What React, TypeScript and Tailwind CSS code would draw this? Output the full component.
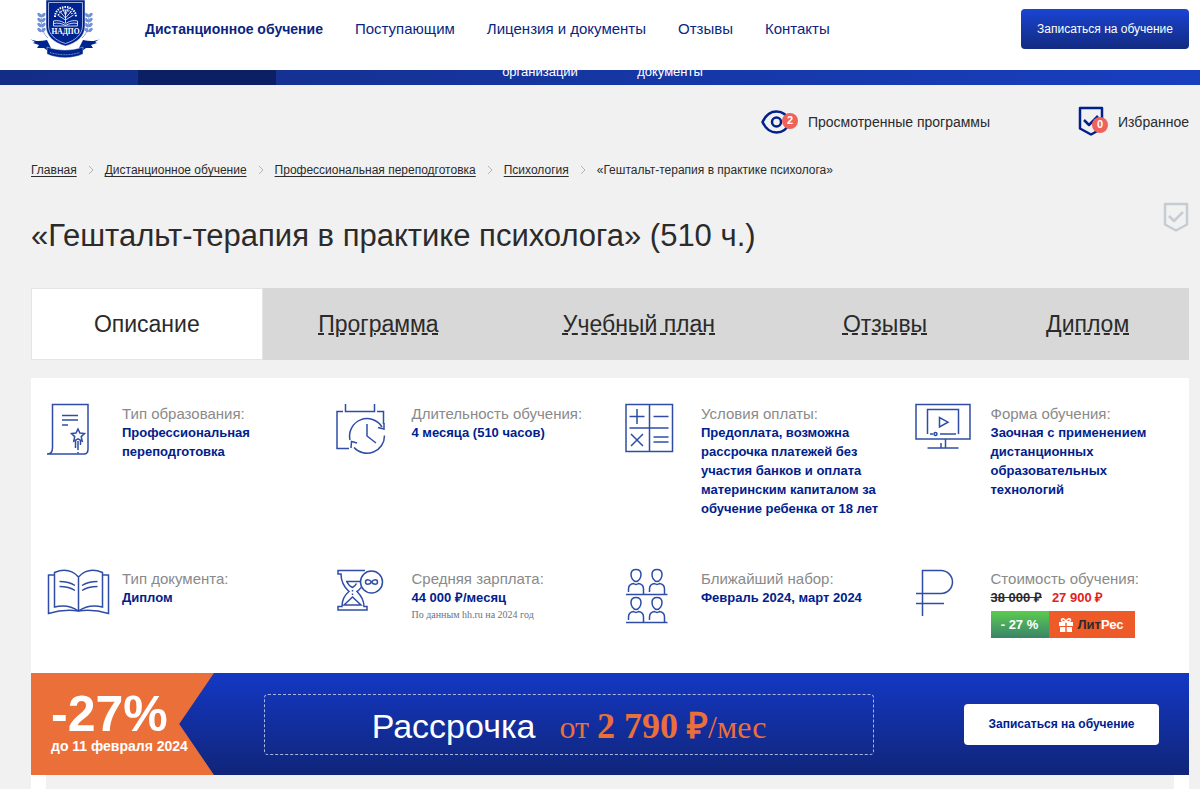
import React from "react";

const sans = "font-['Liberation_Sans',Arial,sans-serif]";
const serif = "font-['Liberation_Serif','Times_New_Roman',serif]";

function Logo() {
  return (
    <svg width="70" height="60" viewBox="0 0 70 60" aria-hidden="true">
      <g fill="#6f8fd8">
        {[15, 20, 25, 30].map((y) => (
          <g key={y}>
            <ellipse cx="9.500" cy={y} rx="2.600" ry="1.500" transform={`rotate(40 9.500 ${y})`} />
            <ellipse cx="13.500" cy={y} rx="2.600" ry="1.500" transform={`rotate(-40 13.500 ${y})`} />
            <ellipse cx="60.500" cy={y} rx="2.600" ry="1.500" transform={`rotate(-40 60.500 ${y})`} />
            <ellipse cx="56.500" cy={y} rx="2.600" ry="1.500" transform={`rotate(40 56.500 ${y})`} />
          </g>
        ))}
      </g>
      <path d="M12 14c-2 9 0 19 6 24M58 14c2 9 0 19-6 24" fill="none" stroke="#6f8fd8" strokeWidth="0.800" />
      <path d="M0 39c6 3 11 2 17 1l4 8-2 4-5-4-7 0 2-3-6-2 2-1zM70 39c-6 3-11 2-17 1l-4 8 2 4 5-4 7 0-2-3 6-2-2-1z" fill="#00248f" />
      <path d="M16 0h39v26c0 10-8 17-19.500 20C24 43 16 36 16 26z" fill="#00248f" stroke="#fff" strokeWidth="0.500" />
      <path d="M18.500 2.500h34V26c0 8-7 14.500-17 17.500C25 40.500 18.500 34 18.500 26z" fill="none" stroke="#c4d0f0" strokeWidth="0.800" />
      <path d="M17 47c11 4 25 4 36 0v7c-11 5-25 5-36 0z" fill="#00248f" stroke="#fff" strokeWidth="0.400" />
      <path d="M20 52.500c10 3 20 3 30 0" fill="none" stroke="#7d96d6" strokeWidth="1" strokeDasharray="1 0.600" />
      <g fill="none" stroke="#fff" strokeWidth="0.800">
        <path d="M35.500 23V10M35.500 20l-8-5M35.500 20l8-5M35.500 18l-6-7M35.500 18l6-7M35.500 15l-3-7M35.500 15l3-7" />
        <path d="M25 17c0-6 5-10 10.500-10S46 11 46 17" strokeWidth="2" strokeDasharray="1.500 1" />
        <path d="M28.500 15c1-3 4-5 7-5s6 2 7 5" strokeDasharray="1 1" strokeWidth="1.500" />
        <path d="M23.500 21c4-1 9 0 12 3 3-3 8-4 12-3M23.500 23.500c4-1 9 0 12 2 3-2 8-3 12-2M23.500 21v5h24v-5" />
      </g>
      <text x="35.500" y="34" textAnchor="middle" fontSize="7.500" fontWeight="bold" fill="#fff" fontFamily="Liberation Serif, serif">
        НАДПО
      </text>
    </svg>
  );
}

function ShieldCheck({ className }: { className: string }) {
  return (
    <svg width="26" height="31" viewBox="0 0 26 31" fill="none" stroke="currentColor" strokeWidth="2.500" strokeLinejoin="round" className={className} aria-hidden="true">
      <path d="M2 2h22v20.500l-11 6-11-6z" />
      <path d="M6 14l5 5L20 10" />
    </svg>
  );
}

function Icon({ name }: { name: string }) {
  return (
    <svg width="66" height="60" viewBox="0 0 66 60" fill="none" stroke="#2f4da6" strokeWidth="1.500" className="shrink-0 overflow-visible" aria-hidden="true">
      {name === "certificate" && (
        <>
          <path d="M0 54c4 0 5.500-2 5.500-6V4.500H41V49c0 3-1 5-4 5H0" />
          <path d="M15 15.500h16M15 20h16M15 25h6M28.500 40v8M31 41v9M33.500 40v5M31 52v1.500" />
          <path d="M31 29l1.900 4 4.600.6-3.300 3 1 4.500-4.200-2.200-4.200 2.200.9-4.500-3.200-3 4.500-.6z" />
        </>
      )}
      {name === "calendar" && (
        <>
          <path d="M12 48.500H0V11.500h6M8.500 4v7.500h29V4M40 11.500h6.500V24" />
          <path d="M13 40A17.500 17.500 0 0 1 45 27M47.500 35.500A17.500 17.500 0 0 1 17 47.500" />
          <path d="M41 27.500l6 1.500v-6M20 43l-5.500-1.500L14 48M30 24v12l9 7" />
        </>
      )}
      {name === "calculator" && (
        <>
          <path d="M0 4.500h46.500v47H0zM23.500 5v46M3.500 28h39" />
          <path d="M3.500 16.500h15M11 9v15M27.500 16.500h15M27.500 37h15M27.500 42h15M5 34l12 12M17 34l-12 12" />
        </>
      )}
      {name === "monitor" && (
        <>
          <path d="M0 4.500h54V39H0zM25 43v5M29.500 39v9M11.500 48h31" />
          <path d="M11.500 34V9.500h31V34M14 34h3M24 34h16" />
          <circle cx="19.500" cy="34" r="1.500" />
          <path d="M23.500 17.500v9.500l8.500-4.800z" />
        </>
      )}
      {name === "book" && (
        <>
          <path d="M31.500 12C25 5 16 4 7.500 7.500V42c8-2 17-1 24 4 7-5 16-6 24-4V7.500C47 4 38 5 31.500 12zM31.500 12v34" />
          <path d="M7 10H1.500v38.500c10-3 20-4 30-2.500 10-1.500 20-.5 30 2.500V10H56" />
          <path d="M12.500 16.500c6 0 11 1 15.500 4M12.500 21.500c6 0 11 1 15.500 4M50.500 16.500c-6 0-11 1-15.500 4M50.500 21.500c-6 0-11 1-15.500 4" />
        </>
      )}
      {name === "hourglass" && (
        <>
          <path d="M28 5.500H1V9h3c0 8 3 13 8 17.500-5 4-7 8-7 15H1V45h29v-3.500h-3c0-7-3-11-7-15 2-1 3-3 4-4" />
          <path d="M9 16.500h14M10 17c2 4 4 5 5.500 5.500 2-1 3-2 4-4M15.500 25v1.500M15.500 28.500v1.500M7 40l8.500-8 8.500 8z" />
          <circle cx="34.500" cy="17" r="11" />
          <path d="M34.500 17c-2-3-6-3-6 0s4 3 6 0 6-3 6 0-4 3-6 0z" />
        </>
      )}
      {name === "people" &&
        [1, 29].map((y) => (
          <g key={y} transform={`translate(0 ${y})`}>
            {[0, 21].map((x) => (
              <g key={x} transform={`translate(${x} 0)`}>
                <path d="M10 3.500c3.500 0 5 2 5 5s-2 7-5 7-5-4-5-7 1.500-5 5-5z" />
                <path d="M2.500 26v-3c0-3 2-5 5-5.500 2 1.500 3 1.500 5 0 3 .5 5 2.500 5 5.500v5" />
              </g>
            ))}
            <path d="M0 28.500h41.500" />
          </g>
        ))}
      {name === "ruble" && <path d="M6.500 51V5.500H25a11.500 11.500 0 0 1 0 23H0M0 38.500h28" />}
    </svg>
  );
}

const crumbs = ["Главная", "Дистанционное обучение", "Профессиональная переподготовка", "Психология"];
const navLinks = ["Поступающим", "Лицензия и документы", "Отзывы", "Контакты"];
const tabs = ["Программа", "Учебный план", "Отзывы", "Диплом"];

type Fact = { icon: string; label: string; value?: React.ReactNode; extra?: React.ReactNode };

const facts: Fact[] = [
  { icon: "certificate", label: "Тип образования:", value: "Профессиональная переподготовка" },
  { icon: "calendar", label: "Длительность обучения:", value: "4 месяца (510 часов)" },
  {
    icon: "calculator",
    label: "Условия оплаты:",
    value: "Предоплата, возможна рассрочка платежей без участия банков и оплата материнским капиталом за обучение ребенка от 18 лет",
  },
  { icon: "monitor", label: "Форма обучения:", value: "Заочная с применением дистанционных образовательных технологий" },
  { icon: "book", label: "Тип документа:", value: "Диплом" },
  {
    icon: "hourglass",
    label: "Средняя зарплата:",
    value: (
      <>
        44 000 <Ruble />
        /месяц
      </>
    ),
    extra: <p className={`${serif} text-[10px] leading-4 text-gray-500`}>По данным hh.ru на 2024 год</p>,
  },
  { icon: "people", label: "Ближайший набор:", value: "Февраль 2024, март 2024" },
  { icon: "ruble", label: "Стоимость обучения:", extra: <Price /> },
];

function Ruble() {
  return <span className={serif}>₽</span>;
}

function Price() {
  return (
    <>
      <p className="flex gap-2.5 text-[13px] leading-[19px] font-bold">
        <s className="text-[#2b2b2b]">
          38 000 <Ruble />
        </s>
        <span className="text-[#e2231a]">
          27 900 <Ruble />
        </span>
      </p>
      <div className="mt-1 flex h-[27px] w-36 text-[13px] font-bold text-white">
        <span className="flex w-[58px] items-center justify-center bg-linear-to-b from-[#5ccb4c] to-[#3a8466]">- 27 %</span>
        <span className="flex flex-1 items-center justify-center gap-1 bg-[#ee5a28]">
          <svg width="14" height="14" viewBox="0 0 14 14" fill="#fff" aria-hidden="true">
            <path d="M0 4h6.300v4H0zM7.700 4H14v4H7.700zM1 9h5.300v5H1zM7.700 9H13v5H7.700z" />
            <path d="M7 4C6 0 2 0 2.500 2.500 3 4 5 4 7 4c2 0 4 0 4.500-1.500C12 0 8 0 7 4z" fill="none" stroke="#fff" strokeWidth="1.400" />
          </svg>
          <span>
            <span className="text-[#2b2b2b]">Лит</span>Рес
          </span>
        </span>
      </div>
    </>
  );
}

export default function App() {
  return (
    <div className={`${sans} min-h-screen overflow-hidden bg-[#f1f1f1] text-[#2b2b2b]`}>
      <header className="flex h-[70px] items-start bg-white pr-[11px] pl-[30px] text-[#0a2580]">
        <a href="#" aria-label="НАДПО">
          <Logo />
        </a>
        <nav className="ml-[45px] flex h-[58px] items-center gap-8 text-[15px] whitespace-nowrap">
          <a href="#" className="text-sm font-bold">
            Дистанционное обучение
          </a>
          {navLinks.map((link) => (
            <a key={link} href="#">
              {link}
            </a>
          ))}
        </nav>
        <button className="mt-[9px] ml-auto h-10 w-[168px] rounded bg-linear-to-b from-[#1a45d4] to-[#122a80] text-xs whitespace-nowrap text-white">
          Записаться на обучение
        </button>
      </header>

      {/* Lower edge of the section menu, tucked under the header */}
      <div className="flex h-[15px] items-end overflow-hidden bg-linear-to-r from-[#132d86] to-[#183fbf] text-[13px] leading-4 text-white">
        <div className="h-full w-[138px]" />
        <div className="h-full w-[138px] bg-[#0b1f63]" />
        <a href="#" className="ml-[199px] w-[130px] pb-[5px] text-center">
          организации
        </a>
        <a href="#" className="w-[130px] pb-[5px] text-center">
          документы
        </a>
      </div>

      <main className="pr-[11px] pl-[31px]">
        <div className="flex h-[73px] items-center justify-end text-sm">
          <a href="#" className="mr-[88px] flex items-center gap-2.5">
            <span className="relative flex w-[37px] text-[#00218c]">
              <svg width="31" height="24" viewBox="0 0 31 24" fill="none" stroke="currentColor" strokeWidth="2.500" aria-hidden="true">
                <path d="M1.500 12C8-2 23-2 29.500 12 23 26 8 26 1.500 12z" strokeLinejoin="round" />
                <circle cx="15.500" cy="12" r="4.500" />
              </svg>
              <span className="absolute top-[3px] right-0 flex size-4 items-center justify-center rounded-full bg-[#ee625a] text-[11px] font-bold text-white">2</span>
            </span>
            Просмотренные программы
          </a>
          <a href="#" className="flex items-center gap-2.5">
            <span className="relative w-[30px] text-[#00218c]">
              <ShieldCheck className="block" />
              <span className="absolute right-0 bottom-1 flex size-4 items-center justify-center rounded-full bg-[#ee625a] text-[11px] font-bold text-white">0</span>
            </span>
            Избранное
          </a>
        </div>

        <nav className="flex h-6 items-center text-xs whitespace-nowrap">
          {crumbs.map((crumb) => (
            <React.Fragment key={crumb}>
              <a href="#" className="underline underline-offset-2">
                {crumb}
              </a>
              <svg width="28" height="10" viewBox="0 0 28 10" fill="none" stroke="#b4b4b4" aria-hidden="true">
                <path d="M12 1l4 4-4 4" />
              </svg>
            </React.Fragment>
          ))}
          <span>«Гештальт-терапия в практике психолога»</span>
        </nav>

        <div className="flex h-[106px] items-start justify-between pt-5">
          <h1 className="mt-4 text-[31px] leading-9">«Гештальт-терапия в практике психолога» (510 ч.)</h1>
          <button aria-label="В избранное">
            <ShieldCheck className="text-[#c6ccd3]" />
          </button>
        </div>

        <div role="tablist" className="grid h-[72px] grid-cols-[20%_20%_25%_17.5%_17.5%] bg-[#d8d8d8] text-[23px]">
          <button role="tab" aria-selected="true" className="border border-[#e4e4e4] bg-white">
            Описание
          </button>
          {tabs.map((tab) => (
            <button key={tab} role="tab" aria-selected="false" className="underline decoration-dashed decoration-2 underline-offset-2">
              {tab}
            </button>
          ))}
        </div>

        <section className="mt-[18px] bg-white">
          <div className="grid grid-cols-4 pt-[22px] pb-[35px]">
            {facts.map((fact, i) => (
              <div key={fact.label} className={`flex gap-[9px] pl-4 ${i < 4 ? "min-h-[165px]" : ""}`}>
                <Icon name={fact.icon} />
                <div className="pt-1 pr-2 text-[13px]">
                  <p className="text-[15px] leading-[19px] whitespace-nowrap text-[#8a8a8a]">{fact.label}</p>
                  {fact.value && <p className="leading-[19px] font-bold text-[#00218c]">{fact.value}</p>}
                  {fact.extra}
                </div>
              </div>
            ))}
          </div>

          <div className="flex h-[102px] items-center bg-linear-to-b from-[#1338c4] to-[#10257a] text-white">
            <div className="flex h-full w-[183px] shrink-0 flex-col justify-center bg-[#eb6f39] pb-1 pl-5 font-bold whitespace-nowrap [clip-path:polygon(0_0,100%_0,81%_50%,100%_100%,0_100%)]">
              <p className="text-[50px] leading-12">-27%</p>
              <p className="text-sm leading-4">до 11 февраля 2024</p>
            </div>
            <div className="ml-[50px] flex h-[61px] w-[610px] items-center justify-center gap-6 rounded border border-dashed border-[#a9b6e2] pt-1 whitespace-nowrap">
              <span className="text-[34px] leading-10">Рассрочка</span>
              <span className={`${serif} text-[32px] leading-10 text-[#eb6f39]`}>
                от <b className="text-4xl leading-10">2 790 ₽</b>/мес
              </span>
            </div>
            <button className="mr-[30px] ml-auto h-[41px] w-[195px] rounded bg-white text-xs font-bold whitespace-nowrap text-[#00218c]">
              Записаться на обучение
            </button>
          </div>

          <div className="mx-[15px] h-[14px] bg-[#f1f1f1]" />
        </section>
      </main>
    </div>
  );
}
